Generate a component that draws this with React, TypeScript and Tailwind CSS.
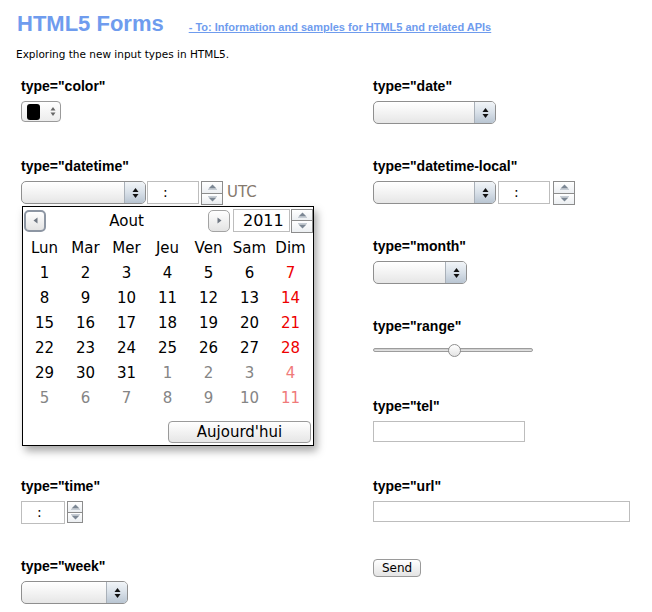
import React from "react";

const label = "font-['Liberation_Sans',Arial,sans-serif] font-bold text-[14px] leading-[16px] text-black";

const SelectArrows = () => (
  <svg width="7" height="12" viewBox="0 0 7 12">
    <path d="M3.5 1 L6.5 5 L0.5 5 Z" fill="#111" />
    <path d="M3.5 11 L6.5 7 L0.5 7 Z" fill="#111" />
  </svg>
);

const SelectBox = ({ className }: { className: string }) => (
  <div
    className={`flex h-[23px] overflow-hidden rounded-[5px] border border-[#8f8f8f] bg-linear-to-b from-white via-[#f3f3f3] to-[#e6e6e6] shadow-[inset_0_1px_0_#fff] ${className}`}
  >
    <div className="flex-1" />
    <div className="flex w-[21px] items-center justify-center border-l border-[#a9b0b8] bg-linear-to-b from-[#f2f5f8] via-[#d8e0e8] to-[#b9c5d2]">
      <SelectArrows />
    </div>
  </div>
);

const Spinner = ({ className }: { className: string }) => (
  <div className={`flex flex-col border border-[#8c8c8c] bg-white ${className}`}>
    <div className="flex flex-1 items-center justify-center border-b border-[#8c8c8c] bg-linear-to-b from-white to-[#eceff2]">
      <svg width="9" height="6" viewBox="0 0 9 6">
        <path d="M4.5 0.5 L8.5 4.5 L0.5 4.5 Z" fill="#7c8794" />
        <rect x="0" y="5" width="9" height="1" fill="#c5ccd4" />
      </svg>
    </div>
    <div className="flex flex-1 items-center justify-center bg-linear-to-b from-white to-[#eceff2]">
      <svg width="9" height="6" viewBox="0 0 9 6">
        <rect x="0" y="0" width="9" height="1" fill="#c5ccd4" />
        <path d="M4.5 5.5 L8.5 1.5 L0.5 1.5 Z" fill="#7c8794" />
      </svg>
    </div>
  </div>
);

const TimeBox = ({ className }: { className: string }) => (
  <div
    className={`h-[23px] border border-[#bdbdbd] bg-white pl-[15px] font-['DejaVu_Sans',sans-serif] text-[14px] leading-[20px] text-black ${className}`}
  >
    :
  </div>
);

const Row = ({ title, children }: { title?: string; children?: React.ReactNode }) => (
  <div className="flex h-[80px] flex-col">
    <div className={`h-[16px] ${label}`}>{title}</div>
    <div className="mt-[7px] flex items-start">{children}</div>
  </div>
);

const days = ["Lun", "Mar", "Mer", "Jeu", "Ven", "Sam", "Dim"];

const weeks: number[][] = [
  [1, 2, 3, 4, 5, 6, 7],
  [8, 9, 10, 11, 12, 13, 14],
  [15, 16, 17, 18, 19, 20, 21],
  [22, 23, 24, 25, 26, 27, 28],
  [29, 30, 31, 1, 2, 3, 4],
  [5, 6, 7, 8, 9, 10, 11],
];

const Calendar = () => (
  <div className="absolute left-[22px] top-[206px] h-[240px] w-[292px] border border-black bg-white font-['DejaVu_Sans',sans-serif] shadow-[3px_5px_8px_rgba(0,0,0,0.35)]">
    <div className="flex h-[25px] items-center pt-[2px]">
      <div className="ml-[1px] flex h-[22px] w-[22px] items-center justify-center rounded-[5px] border-2 border-[#8d96a3] bg-linear-to-b from-white to-[#e3e3e3]">
        <svg width="5" height="7" viewBox="0 0 5 7">
          <path d="M0.5 3.5 L4.5 0.5 L4.5 6.5 Z" fill="#6f7782" />
        </svg>
      </div>
      <div className="flex-1 pr-[1px] text-center text-[15px] leading-[20px]">Aout</div>
      <div className="flex h-[22px] w-[22px] items-center justify-center rounded-[5px] border border-[#a3a3a3] bg-linear-to-b from-white to-[#e3e3e3]">
        <svg width="5" height="7" viewBox="0 0 5 7">
          <path d="M4.5 3.5 L0.5 0.5 L0.5 6.5 Z" fill="#6f7782" />
        </svg>
      </div>
      <div className="ml-[3px] h-[23px] w-[57px] border border-[#bdbdbd] pl-[9px] text-[16px] leading-[21px]">2011</div>
      <Spinner className="ml-[1px] h-[24px] w-[22px]" />
    </div>
    <div className="ml-[1px] mt-[4px] grid w-[287px] grid-cols-7">
      {days.map((d) => (
        <div key={d} className="h-[25px] text-center text-[15px] leading-[25px]">
          {d}
        </div>
      ))}
      {weeks.map((w, wi) =>
        w.map((n, i) => {
          const other = (wi === 4 && n < 10) || wi === 5;
          const sunday = i === 6;
          const color = sunday ? (other ? "text-[#f07a7a]" : "text-[#ee0000]") : other ? "text-[#858585]" : "text-black";
          return (
            <div key={`${wi}-${i}`} className={`h-[25px] text-center text-[15px] leading-[25px] ${color}`}>
              {n}
            </div>
          );
        })
      )}
    </div>
    <div className="mt-[10px] flex justify-end pr-[2px]">
      <div className="h-[22px] w-[143px] rounded-[4px] border border-[#9a9a9a] bg-linear-to-b from-white to-[#e6e6e6] text-center text-[15px] leading-[20px]">
        Aujourd'hui
      </div>
    </div>
  </div>
);

export default function App() {
  return (
    <div className="relative h-[612px] w-[652px] overflow-hidden bg-white">
      <div className="flex items-baseline pl-[17px] pt-[10px] font-['Liberation_Sans',Arial,sans-serif] text-[#6f9cee]">
        <h1 className="text-[22px] font-bold leading-[28px]">HTML5 Forms</h1>
        <a href="#" className="ml-[25px] text-[11px] font-bold underline">
          - To: Information and samples for HTML5 and related APIs
        </a>
      </div>
      <p className="mt-[9px] pl-[16px] font-['DejaVu_Sans',sans-serif] text-[10.5px] leading-[14px] text-black">
        Exploring the new input types in HTML5.
      </p>
      <div className="mt-[17px] grid grid-cols-[352px_1fr] pl-[21px]">
        <div className="flex flex-col">
          <Row title={'type="color"'}>
            <div className="flex h-[21px] w-[40px] items-center rounded-[4px] border border-[#9a9a9a] bg-linear-to-b from-white to-[#ececec]">
              <div className="ml-[5px] h-[16px] w-[13px] rounded-[3px] bg-black" />
              <svg className="ml-[10px]" width="6" height="11" viewBox="0 0 6 11">
                <path d="M3 1 L5.5 4.5 L0.5 4.5 Z" fill="#666" />
                <path d="M3 10 L5.5 6.5 L0.5 6.5 Z" fill="#666" />
              </svg>
            </div>
          </Row>
          <Row title={'type="datetime"'}>
            <SelectBox className="w-[125px]" />
            <TimeBox className="ml-[1px] w-[52px]" />
            <Spinner className="ml-[2px] h-[24px] w-[22px]" />
            <span className="ml-[4px] font-['DejaVu_Sans',sans-serif] text-[15px] leading-[23px] text-[#85796d]">UTC</span>
          </Row>
          <Row />
          <Row />
          <Row />
          <Row title={'type="time"'}>
            <TimeBox className="h-[22px] w-[44px] pl-[10px]" />
            <Spinner className="ml-[2px] h-[22px] w-[16px]" />
          </Row>
          <Row title={'type="week"'}>
            <SelectBox className="w-[107px]" />
          </Row>
        </div>
        <div className="flex flex-col">
          <Row title={'type="date"'}>
            <SelectBox className="w-[123px]" />
          </Row>
          <Row title={'type="datetime-local"'}>
            <SelectBox className="w-[123px]" />
            <TimeBox className="ml-[2px] w-[52px]" />
            <Spinner className="ml-[3px] h-[24px] w-[22px]" />
          </Row>
          <Row title={'type="month"'}>
            <SelectBox className="w-[94px]" />
          </Row>
          <Row title={'type="range"'}>
            <div className="relative mt-[7px] h-[4px] w-[160px] rounded-full border border-[#9c9c9c] bg-linear-to-b from-[#c9c9c9] to-[#e9e9e9]">
              <div className="absolute left-[74px] top-[-5px] h-[13px] w-[13px] rounded-full border border-[#8e8e8e] bg-linear-to-b from-white to-[#e4e4e4]" />
            </div>
          </Row>
          <Row title={'type="tel"'}>
            <div className="h-[21px] w-[152px] border border-[#bdbdbd] bg-white" />
          </Row>
          <Row title={'type="url"'}>
            <div className="h-[21px] w-[257px] border border-[#bdbdbd] bg-white" />
          </Row>
          <div className="mt-[1px]">
            <div className="h-[18px] w-[48px] rounded-[4px] border border-[#9a9a9a] bg-linear-to-b from-white to-[#e4e4e4] text-center font-['DejaVu_Sans',sans-serif] text-[12px] leading-[16px] text-black">
              Send
            </div>
          </div>
        </div>
      </div>
      <Calendar />
    </div>
  );
}
